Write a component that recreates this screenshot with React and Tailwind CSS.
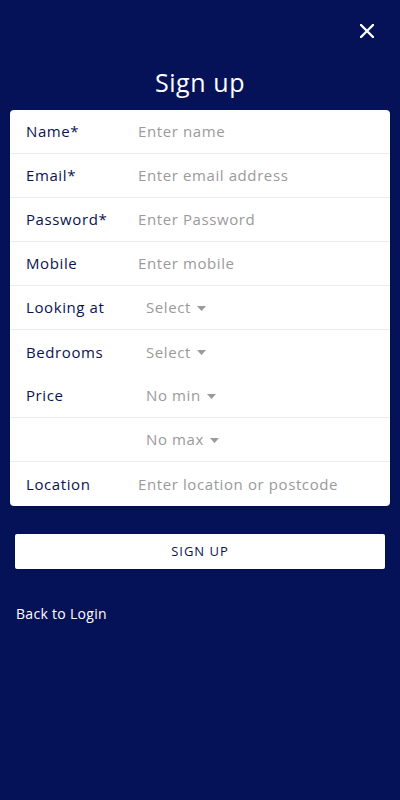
import React from 'react';

const font = { fontFamily: '"Open Sans", "Noto Sans", sans-serif' };

const Caret = () => (
  <svg width="9" height="5" viewBox="0 0 9 5" className="ml-[6px] mt-[1px]">
    <path d="M0 0h9L4.5 5z" fill="#9a9a9a" />
  </svg>
);

const InputRow = ({ label, placeholder, last }) => (
  <div className={`flex items-center h-11 tracking-[0.6px] ${last ? '' : 'border-b border-[#ececec]'}`}>
    <div className="w-[128px] shrink-0 pl-4 text-[15px] text-[#0b1350]">{label}</div>
    <div className="text-[15px] text-[#9a9a9a]">{placeholder}</div>
  </div>
);

const SelectRow = ({ label, value, divider = true }) => (
  <div className={`flex items-center h-11 tracking-[0.6px] ${divider ? 'border-b border-[#ececec]' : ''}`}>
    <div className="w-[128px] shrink-0 pl-4 text-[15px] text-[#0b1350]">{label}</div>
    <div className="flex items-center pl-2 text-[15px] text-[#9a9a9a]">
      {value}
      <Caret />
    </div>
  </div>
);

export default function App() {
  return (
    <div className="min-h-[800px] bg-[#061258] text-white" style={font}>
      <div className="flex justify-end pt-6 pr-[26px]">
        <svg width="14" height="14" viewBox="0 0 14 14">
          <path d="M1 1l12 12M13 1L1 13" stroke="white" strokeWidth="2.4" strokeLinecap="round" />
        </svg>
      </div>

      <h1 className="text-center text-[25px] tracking-[0.6px] leading-none mt-[32px] mb-[15px]">Sign up</h1>

      <div className="mx-[10px] bg-white rounded-[4px] shadow">
        <InputRow label="Name*" placeholder="Enter name" />
        <InputRow label="Email*" placeholder="Enter email address" />
        <InputRow label="Password*" placeholder="Enter Password" />
        <InputRow label="Mobile" placeholder="Enter mobile" />
        <SelectRow label="Looking at" value="Select" />
        <SelectRow label="Bedrooms" value="Select" divider={false} />
        <SelectRow label="Price" value="No min" />
        <SelectRow label="" value="No max" />
        <InputRow label="Location" placeholder="Enter location or postcode" last />
      </div>

      <div className="px-[15px] mt-[28px]">
        <button className="w-full h-[35px] bg-white rounded-[2px] shadow text-[13px] tracking-[1px] text-[#0b1350] uppercase">
          Sign up
        </button>
      </div>

      <div className="px-4 mt-[34px] text-[14px] tracking-[0.3px]">Back to Login</div>
    </div>
  );
}
